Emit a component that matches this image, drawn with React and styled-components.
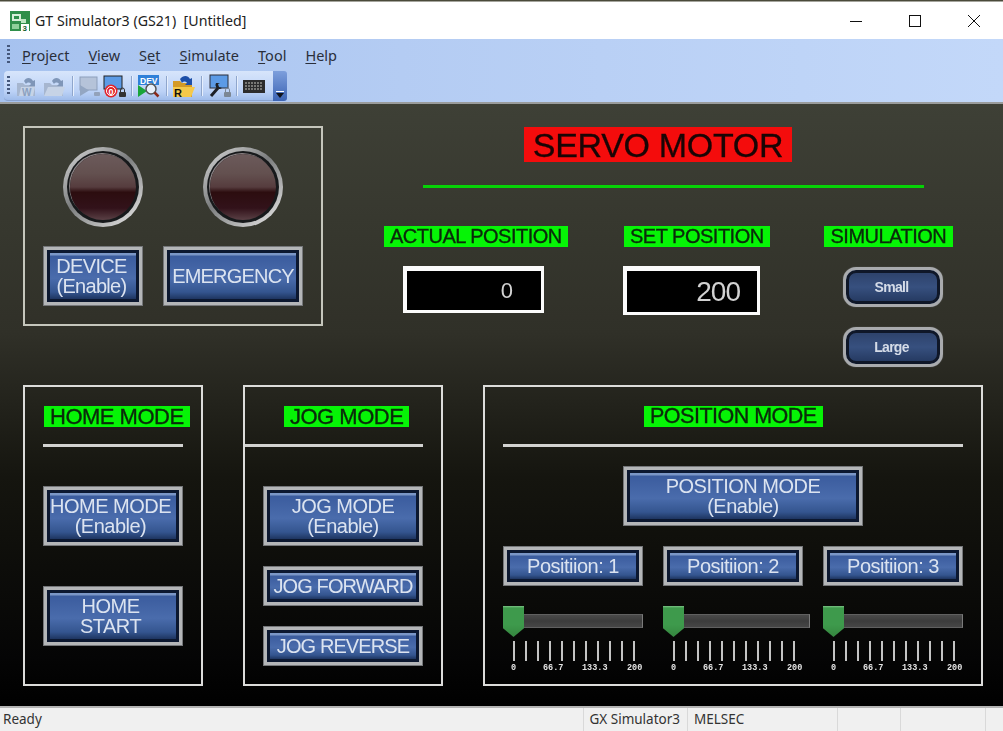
import React from 'react';
import styled, { createGlobalStyle } from 'styled-components';

const GlobalStyle = createGlobalStyle`
  html, body { margin: 0; padding: 0; background: #fff; }
  #root { width: 1003px; height: 731px; overflow: hidden; }
  * { box-sizing: border-box; }
`;

const Window = styled.div`
  display: flex;
  flex-direction: column;
  width: 1003px;
  height: 731px;
  overflow: hidden;
  font-family: "Segoe UI", "Noto Sans", "Open Sans", sans-serif;
  color: #1a1a1a;
`;

const TitleBar = styled.div`
  display: flex;
  align-items: center;
  height: 39px;
  padding: 2px 0 0 10px;
  background: linear-gradient(#4a4a3a 0, #4a4a3a 1px, #fff 2px);
`;

const AppIcon = styled.svg`
  width: 20px;
  height: 20px;
  margin-right: 5px;
`;

const TitleText = styled.span`
  flex: 1;
  font-size: 14.2px;
  white-space: pre;
  color: #222;
`;

const WinButton = styled.div`
  display: flex;
  align-items: center;
  justify-content: center;
  width: 59px;
  height: 37px;
`;

const BarArea = styled.div`
  height: 65px;
  background: linear-gradient(90deg, #a6c2ef 0, #b4ccf3 40%, #c3d8f9 100%);
  border-bottom: 2px solid #9a9c9c;
`;

const MenuBar = styled.div`
  display: flex;
  align-items: center;
  height: 32px;
  padding-left: 7px;
`;

const Grip = styled.div`
  width: 3px;
  height: ${props => props.$h}px;
  margin-right: 12px;
  background: repeating-linear-gradient(#45587c 0 2px, transparent 2px 4px);
`;

const MenuItem = styled.span`
  margin-right: 19px;
  font-size: 14.5px;
  color: #2a2f3a;
  u { text-underline-offset: 2px; }
`;

const ToolRow = styled.div`
  display: flex;
  height: 31px;
  padding-left: 4px;
`;

const ToolBar = styled.div`
  display: flex;
  align-items: center;
  width: 269px;
  height: 30px;
  padding-left: 3px;
  border-radius: 4px 0 0 4px;
  background: linear-gradient(#d7e5fb, #bcd2f6 70%, #9fbcea);
  border-bottom: 1px solid #8aa4d0;
`;

const ToolGrip = styled(Grip)`
  margin-right: 5px;
`;

const ToolIcon = styled.svg`
  width: 24px;
  height: 24px;
  margin-right: ${props => props.$gap ?? 0}px;
`;

const ToolSep = styled.div`
  width: 1px;
  height: 20px;
  margin: 0 5px;
  background: #8fa6cc;
  box-shadow: 1px 0 0 #e6effd;
`;

const Chevron = styled.div`
  display: flex;
  flex-direction: column;
  align-items: center;
  justify-content: flex-end;
  width: 14px;
  height: 30px;
  padding-bottom: 3px;
  border-radius: 0 3px 3px 0;
  background: linear-gradient(#7d9fdc, #3c64b4);
`;

const ChevLine = styled.div`
  width: 8px;
  height: 1px;
  margin-bottom: 1px;
  background: #fff;
`;

const ChevArrow = styled.div`
  border-left: 4.5px solid transparent;
  border-right: 4.5px solid transparent;
  border-top: 5px solid #10131a;
`;

const Screen = styled.div`
  display: flex;
  flex-direction: column;
  height: 602px;
  padding: 22px 20px 20px 23px;
  background: linear-gradient(#3e4036 0, #303028 38%, #15150f 62%, #050505 92%, #000 100%);
  filter: blur(0.35px);
`;

const TopRow = styled.div`
  display: flex;
  height: 260px;
`;

const BottomRow = styled.div`
  display: flex;
  gap: 40px;
  height: 300px;
  margin-top: -1px;
`;

const Panel = styled.div`
  display: flex;
  flex-direction: column;
  width: ${props => props.$w}px;
  height: ${props => props.$h || 301}px;
  border: 2px solid ${props => props.$top ? '#c5c6bc' : '#dcdcda'};
`;

const LampRow = styled.div`
  display: flex;
  gap: 60px;
  padding: 19px 0 0 38px;
`;

const Lamp = styled.div`
  position: relative;
  width: 80px;
  height: 80px;
  border-radius: 50%;
  background: linear-gradient(140deg, #dcdcdc, #7b7d7e 45%, #cfcfcf 85%);
  &::before {
    content: '';
    position: absolute;
    inset: 4px;
    border-radius: 50%;
    background: #17191b;
  }
  &::after {
    content: '';
    position: absolute;
    inset: 7px;
    border-radius: 50%;
    background: linear-gradient(#6c5a5b 0, #63504f 30%, #563c3e 50%, #2c0d0f 58%, #32121a 82%, #5a4045 100%);
    box-shadow: -1px -1px 0 #8a8284;
  }
`;

const ButtonRow = styled.div`
  display: flex;
  gap: 20px;
  padding: 19px 0 0 18px;
`;

const HmiButton = styled.div`
  display: flex;
  align-items: center;
  justify-content: center;
  flex: none;
  width: ${props => props.$w}px;
  height: ${props => props.$h || 60}px;
  padding-right: ${props => props.$pr || 0}px;
  border: 4px solid #b4b6b8;
  outline: 1px solid #75777a;
  outline-offset: -1px;
  background: #0c1830;
  background-clip: padding-box;
  box-shadow: inset 0 0 0 3px #0c1830;
  margin: ${props => props.$m || 0};
  text-align: center;
  font-family: "Liberation Sans", Arial, sans-serif;
  font-size: 20px;
  line-height: 20px;
  letter-spacing: ${props => props.$ls ?? -0.5}px;
  white-space: pre-line;
  color: #dbe3f0;
  position: relative;
  z-index: 0;
  &::before {
    content: '';
    position: absolute;
    inset: 3px;
    z-index: -1;
    background: linear-gradient(#7b97c7 0, #7b97c7 2px, #3b5c9e 3px, #4a6cac 55%, #34558f 85%, #1e3560 100%);
  }
`;

const RightSide = styled.div`
  display: flex;
  flex-direction: column;
  width: 660px;
`;

const Title = styled.div`
  width: 268px;
  height: 35px;
  margin: 1px 0 0 201px;
  background: #f40c0c;
  text-align: center;
  font-family: "Liberation Sans", Arial, sans-serif;
  font-size: 34px;
  line-height: 36px;
  letter-spacing: -0.3px;
  -webkit-text-stroke: 0.3px #1a0505;
  color: #1a0505;
`;

const GreenLine = styled.div`
  width: 501px;
  height: 3px;
  margin: 23px 0 0 100px;
  background: #06d206;
`;

const ReadoutRow = styled.div`
  display: flex;
  margin: 38px 0 0 61px;
`;

const Readout = styled.div`
  display: flex;
  flex-direction: column;
  width: ${props => props.$w}px;
  margin-right: ${props => props.$gap || 0}px;
`;

const GreenLabel = styled.div`
  flex: none;
  align-self: flex-start;
  height: 21px;
  padding: 0 ${props => props.$pad ?? 6}px;
  margin: ${props => props.$m || 0};
  background: #06f406;
  font-family: "Liberation Sans", Arial, sans-serif;
  font-size: ${props => props.$size || 20}px;
  line-height: 21px;
  letter-spacing: -0.5px;
  -webkit-text-stroke: 0.35px #0b2a0b;
  white-space: nowrap;
  color: #0b2a0b;
`;

const ValueBox = styled.div`
  width: ${props => props.$w}px;
  height: ${props => props.$h}px;
  margin: 19px 0 0 ${props => props.$left}px;
  padding-right: ${props => props.$pr}px;
  border-style: solid;
  border-color: #fbfbfb;
  border-width: 5px 3px 3px 4px;
  background: #000;
  text-align: right;
  font-family: "Liberation Sans", Arial, sans-serif;
  font-size: ${props => props.$size}px;
  line-height: ${props => props.$h - 8}px;
  letter-spacing: ${props => props.$ls || 0}px;
  color: #d2d2d2;
`;

const PillButton = styled.div`
  display: flex;
  align-items: center;
  justify-content: center;
  width: 100px;
  height: 40px;
  margin: ${props => props.$m};
  padding-right: 3px;
  border: 3px solid #a9abae;
  border-radius: 13px;
  background: linear-gradient(#2c4067, #37507f 50%, #22365c);
  box-shadow: inset 0 0 0 3px #0f1728, 0 0 1px #888;
  font-family: "Liberation Sans", Arial, sans-serif;
  font-size: 14px;
  font-weight: bold;
  letter-spacing: -0.7px;
  color: #d5dce8;
`;

const Rule = styled.div`
  height: 3px;
  width: ${props => props.$w}px;
  margin: 17px 0 0 ${props => props.$left}px;
  background: #d2d2d0;
`;

const PanelColumn = styled.div`
  display: flex;
  flex-direction: column;
  padding-left: ${props => props.$left}px;
`;

const PositionRow = styled.div`
  display: flex;
  gap: 20px;
  margin: ${props => props.$top ?? 20}px 0 0 18px;
`;

const SliderCol = styled.div`
  display: flex;
  flex-direction: column;
  width: 140px;
`;

const SliderTrack = styled.div`
  position: relative;
  width: ${props => props.$w || 140}px;
  height: 30px;
  margin-top: 20px;
  padding-top: 8px;
`;

const TrackBar = styled.div`
  height: 14px;
  border: 1px solid #606060;
  border-right-color: #7a7a7a;
  background: linear-gradient(#4a4a4a, #3c3c3c 50%, #464646);
`;

const Thumb = styled.div`
  position: absolute;
  left: 0;
  top: 0;
  width: 21px;
  height: 31px;
  background: linear-gradient(#7cc486 0, #3e9a4c 2px, #3e9a4c 60%, #35863f);
  clip-path: polygon(0 0, 100% 0, 100% 72%, 50% 100%, 0 72%);
`;

const Ticks = styled.div`
  display: flex;
  justify-content: space-between;
  width: 122px;
  height: 20px;
  margin: 5px 0 0 10px;
`;

const Tick = styled.div`
  width: 2px;
  height: 20px;
  background: #c4c4c4;
`;

const TickLabels = styled.div`
  position: relative;
  height: 11px;
  margin-top: 2px;
  font-family: "Liberation Mono", monospace;
  font-size: 8.5px;
  line-height: 11px;
  font-weight: bold;
  color: #e4e4e4;
`;

const TickLabel = styled.span`
  position: absolute;
  left: ${props => props.$x}px;
`;

const StatusBar = styled.div`
  display: flex;
  align-items: center;
  height: 25px;
  border-top: 2px solid #b4b4b4;
  background: #f0f0f0;
  font-size: 13.5px;
  color: #333;
`;

const StatusPane = styled.div`
  flex: ${props => props.$grow ? 1 : 'none'};
  width: ${props => props.$w ? props.$w + 'px' : 'auto'};
  height: 100%;
  padding: 2px 7px 0 ${props => props.$pl ?? 6}px;
  border-left: ${props => props.$grow ? 'none' : '1px solid #d9d9d9'};
  text-align: ${props => props.$right ? 'right' : 'left'};
  white-space: nowrap;
`;

const Line = () => <svg width="14" height="14" viewBox="0 0 14 14"><path d="M1 7.5h12" stroke="#111" strokeWidth="1" /></svg>;
const Square = () => <svg width="14" height="14" viewBox="0 0 14 14"><rect x="1.5" y="1.5" width="11" height="11" fill="none" stroke="#111" strokeWidth="1" /></svg>;
const Cross = () => <svg width="14" height="14" viewBox="0 0 14 14"><path d="M1 1l12 12M13 1L1 13" stroke="#111" strokeWidth="1" /></svg>;

const ToolArrow = ({ color }) => (
  <path d="M9 7c2-4 7-4 9 0l2-1v6h-6l2-2c-1-2-4-2-5 0z" fill={color} />
);

const Lock = ({ fill }) => (
  <g>
    <path d="M18.5 18v-2a2 2 0 0 1 4 0v2" fill="none" stroke={fill} strokeWidth="1" />
    <rect x="17" y="18" width="7" height="5" rx="1" fill={fill} />
  </g>
);

function WriteIcon() {
  return (
    <ToolIcon viewBox="0 0 24 24" $gap={4}>
      <path d="M2 9h6l2 2h10v11H2z" fill="#a6b6cf" />
      <path d="M6 13h14l-2 9H4z" fill="#c6d3e6" />
      <ToolArrow color="#7f96b8" />
      <text x="7" y="22" fontSize="10" fontWeight="bold" fontFamily="Liberation Sans" fill="#8ba0c0">W</text>
    </ToolIcon>
  );
}

function OpenIcon() {
  return (
    <ToolIcon viewBox="0 0 24 24">
      <path d="M1 9h6l2 2h11v11H1z" fill="#a6b6cf" />
      <path d="M5 13h17l-3 9H1z" fill="#c6d3e6" />
      <ToolArrow color="#7f96b8" />
    </ToolIcon>
  );
}

function ScreenPlayIcon() {
  return (
    <ToolIcon viewBox="0 0 24 24">
      <rect x="2" y="3" width="17" height="13" fill="#b5c3d9" stroke="#8d9fbb" />
      <path d="M2 11l9 5.5-9 5.5z" fill="#93a6c2" />
      <rect x="16" y="18" width="6" height="4" rx="1" fill="#93a2ba" />
    </ToolIcon>
  );
}

function RecordIcon() {
  return (
    <ToolIcon viewBox="0 0 24 24">
      <rect x="2" y="2" width="18" height="13" fill="#5c9be6" stroke="#222" />
      <circle cx="9" cy="17" r="6.5" fill="#e22228" />
      <circle cx="9" cy="17" r="4.5" fill="none" stroke="#fff" strokeWidth="1" />
      <text x="6.5" y="20.5" fontSize="9" fontWeight="bold" fontFamily="Liberation Sans" fill="#fff">0</text>
      <Lock fill="#333" />
    </ToolIcon>
  );
}

function DevIcon() {
  return (
    <ToolIcon viewBox="0 0 24 24">
      <rect x="1" y="1" width="21" height="10" fill="#2f80d8" />
      <text x="3" y="9.5" fontSize="8.5" fontWeight="bold" fontFamily="Liberation Sans" fill="#fff">DEV</text>
      <path d="M1 11l9 6-9 6z" fill="#19a53a" />
      <circle cx="14" cy="15" r="5" fill="#e8f0fa" stroke="#555" strokeWidth="1.5" />
      <path d="M17.5 18.5l4 4" stroke="#8a2a1a" strokeWidth="2.5" />
    </ToolIcon>
  );
}

function ReadIcon() {
  return (
    <ToolIcon viewBox="0 0 24 24">
      <path d="M1 7h7l2 2h10v14H1z" fill="#d49a26" />
      <path d="M5 13h18l-4 10H3z" fill="#f5c94a" />
      <path d="M8 5c3-4 8-4 10 0l2-1v7h-7l2-2c-1-2-4-2-5 0z" fill="#1d4fa8" />
      <rect x="1" y="13" width="10" height="10" fill="#f5c94a" />
      <text x="2" y="22.5" fontSize="11" fontWeight="bold" fontFamily="Liberation Sans" fill="#111">R</text>
    </ToolIcon>
  );
}

function WrenchIcon() {
  return (
    <ToolIcon viewBox="0 0 24 24">
      <rect x="3" y="1" width="18" height="13" fill="#5c9be6" stroke="#2a2f3a" />
      <path d="M4 22l7-8" stroke="#1d2026" strokeWidth="3" />
      <path d="M9 9a4 4 0 0 0 4 6l2-1-3-1-1-3 2-1z" fill="#1d2026" />
      <Lock fill="#7c8794" />
    </ToolIcon>
  );
}

function KeyboardIcon() {
  return (
    <ToolIcon viewBox="0 0 24 24">
      <rect x="1" y="6" width="22" height="13" fill="#2c2c2c" />
      <path d="M3 9h18M3 12h18M3 15h18" stroke="#c4c4bc" strokeWidth="1" strokeDasharray="2 1" />
    </ToolIcon>
  );
}

const BUTTON_TICKS = Array.from({ length: 11 });

function Slider({ width }) {
  return (
    <SliderCol>
      <SliderTrack $w={width}>
        <TrackBar />
        <Thumb />
      </SliderTrack>
      <Ticks>
        {BUTTON_TICKS.map((_, i) => <Tick key={i} />)}
      </Ticks>
      <TickLabels>
        <TickLabel $x={8}>0</TickLabel>
        <TickLabel $x={40}>66.7</TickLabel>
        <TickLabel $x={79}>133.3</TickLabel>
        <TickLabel $x={124}>200</TickLabel>
      </TickLabels>
    </SliderCol>
  );
}

export default function App() {
  return (
    <Window>
      <GlobalStyle />
      <TitleBar>
        <AppIcon viewBox="0 0 20 20">
          <rect width="20" height="20" fill="#2f8f4a" />
          <rect x="2" y="3" width="9" height="7" fill="#d7efd9" />
          <rect x="4" y="5" width="5" height="3" fill="#2f8f4a" />
          <rect x="11" y="8" width="5" height="4" fill="#bfe6c4" />
          <path d="M2 13h7v5H2z" fill="#8fd09a" />
          <rect x="11" y="13" width="8" height="7" fill="#fff" />
          <text x="12.5" y="19.5" fontSize="8" fontWeight="bold" fontFamily="Liberation Sans" fill="#17602c">3</text>
        </AppIcon>
        <TitleText>GT Simulator3 (GS21)  [Untitled]</TitleText>
        <WinButton><Line /></WinButton>
        <WinButton><Square /></WinButton>
        <WinButton><Cross /></WinButton>
      </TitleBar>

      <BarArea>
        <MenuBar>
          <Grip $h={20} />
          <MenuItem><u>P</u>roject</MenuItem>
          <MenuItem><u>V</u>iew</MenuItem>
          <MenuItem>S<u>e</u>t</MenuItem>
          <MenuItem><u>S</u>imulate</MenuItem>
          <MenuItem><u>T</u>ool</MenuItem>
          <MenuItem><u>H</u>elp</MenuItem>
        </MenuBar>
        <ToolRow>
          <ToolBar>
            <ToolGrip $h={20} />
            <WriteIcon />
            <OpenIcon />
            <ToolSep />
            <ScreenPlayIcon />
            <RecordIcon />
            <ToolSep />
            <DevIcon />
            <ToolSep />
            <ReadIcon />
            <ToolSep />
            <WrenchIcon />
            <ToolSep />
            <KeyboardIcon />
          </ToolBar>
          <Chevron>
            <ChevLine />
            <ChevArrow />
          </Chevron>
        </ToolRow>
      </BarArea>

      <Screen>
        <TopRow>
          <Panel $w={300} $h={200} $top>
            <LampRow>
              <Lamp />
              <Lamp />
            </LampRow>
            <ButtonRow>
              <HmiButton $w={100} $pr={3} $ls={-0.7}>{'DEVICE\n(Enable)'}</HmiButton>
              <HmiButton $w={140} $ls={-0.8}>EMERGENCY</HmiButton>
            </ButtonRow>
          </Panel>
          <RightSide>
            <Title>SERVO MOTOR</Title>
            <GreenLine />
            <ReadoutRow>
              <Readout $w={184} $gap={56}>
                <GreenLabel>ACTUAL POSITION</GreenLabel>
                <ValueBox $w={141} $h={47} $left={19} $pr={28} $size={22}>0</ValueBox>
              </Readout>
              <Readout $w={145} $gap={55}>
                <GreenLabel>SET POSITION</GreenLabel>
                <ValueBox $w={137} $h={49} $left={-1} $pr={17} $size={28} $ls={-1}>200</ValueBox>
              </Readout>
              <Readout $w={128}>
                <GreenLabel $pad={6.5}>SIMULATION</GreenLabel>
                <PillButton $m="20px 0 0 19px">Small</PillButton>
                <PillButton $m="20px 0 0 19px">Large</PillButton>
              </Readout>
            </ReadoutRow>
          </RightSide>
        </TopRow>

        <BottomRow>
          <Panel $w={180}>
            <GreenLabel $m="19px 0 0 19px" $size={22}>HOME MODE</GreenLabel>
            <Rule $w={140} $left={18} />
            <PanelColumn $left={18}>
              <HmiButton $w={140} $m="39px 0 0" $pr={5}>{'HOME MODE\n(Enable)'}</HmiButton>
              <HmiButton $w={140} $m="40px 0 0" $pr={5}>{'HOME\nSTART'}</HmiButton>
            </PanelColumn>
          </Panel>
          <Panel $w={200}>
            <GreenLabel $m="19px 0 0 39px" $size={22}>JOG MODE</GreenLabel>
            <Rule $w={178} $left={0} />
            <PanelColumn $left={18}>
              <HmiButton $w={160} $m="39px 0 0">{'JOG MODE\n(Enable)'}</HmiButton>
              <HmiButton $w={160} $h={40} $m="20px 0 0" $ls={-0.9}>JOG FORWARD</HmiButton>
              <HmiButton $w={160} $h={40} $m="20px 0 0" $ls={-0.9}>JOG REVERSE</HmiButton>
            </PanelColumn>
          </Panel>
          <Panel $w={500}>
            <GreenLabel $m="19px 0 0 159px" $size={21.5}>POSITION MODE</GreenLabel>
            <Rule $w={460} $left={18} />
            <PanelColumn $left={138}>
              <HmiButton $w={240} $m="19px 0 0">{'POSITION MODE\n(Enable)'}</HmiButton>
            </PanelColumn>
            <PositionRow>
              <HmiButton $w={140} $h={40}>Positiion: 1</HmiButton>
              <HmiButton $w={140} $h={40}>Positiion: 2</HmiButton>
              <HmiButton $w={140} $h={40}>Positiion: 3</HmiButton>
            </PositionRow>
            <PositionRow $top={0}>
              <Slider />
              <Slider width={147} />
              <Slider />
            </PositionRow>
          </Panel>
        </BottomRow>
      </Screen>

      <StatusBar>
        <StatusPane $grow $pl={3}>Ready</StatusPane>
        <StatusPane $w={104} $right $pl={0}>GX Simulator3</StatusPane>
        <StatusPane $w={150}>MELSEC</StatusPane>
        <StatusPane $w={63} />
        <StatusPane $w={85} />
        <StatusPane $w={18} />
      </StatusBar>
    </Window>
  );
}
